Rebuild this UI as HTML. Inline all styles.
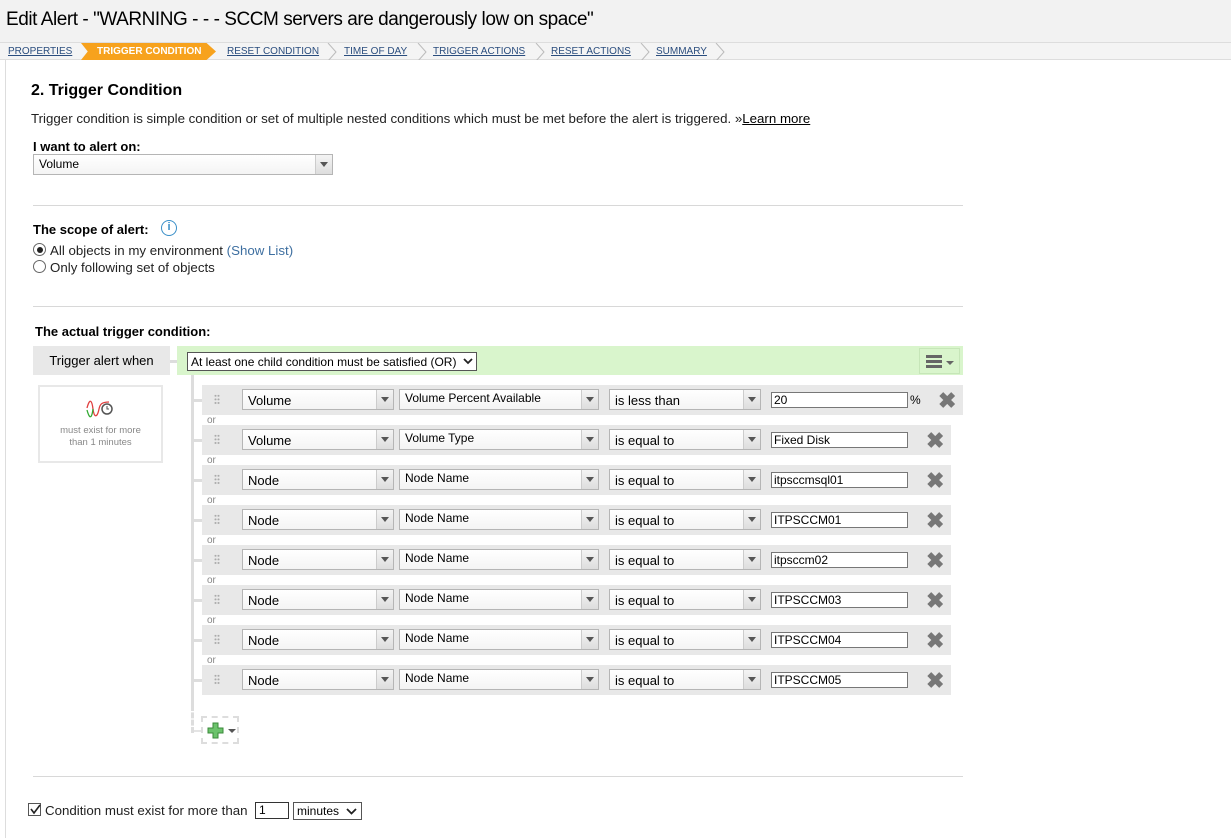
<!DOCTYPE html>
<html><head><meta charset="utf-8"><style>
*{margin:0;padding:0;box-sizing:border-box}
body{width:1231px;height:838px;background:#fff;font-family:"Liberation Sans",Arial,sans-serif;color:#000;position:relative;overflow:hidden;font-size:13px}
.a{position:absolute}
#top{left:0;top:0;width:1231px;height:42px;background:#f2f2f2}
#title{left:6px;top:9px;font-size:19px;white-space:nowrap;letter-spacing:-0.45px}
#tabs{left:0;top:42px;width:1231px;height:18px;background:#f4f4f4;border-top:1px solid #ddd;border-bottom:1px solid #ddd}
.tab{top:3px;font-size:10px;color:#2a4d7e;text-decoration:underline;white-space:nowrap}
#panel{left:5px;top:60px;width:1226px;height:778px;border-left:1px solid #ddd;background:#fff}
.hr{height:1px;background:#d8d8d8;left:33px;width:930px}
.sel{position:absolute;height:21px;border:1px solid #b5b5b5;background:linear-gradient(#fff,#f4f4f4);font-size:13px;padding:2px 0 0 5px;white-space:nowrap;overflow:hidden}
.sel:after{content:"";position:absolute;right:0;top:0;width:16px;height:19px;background:linear-gradient(#f4f4f4,#ddd);border-left:1px solid #ccc}
.sel b{position:absolute;right:4px;top:7px;width:0;height:0;border-left:4px solid transparent;border-right:4px solid transparent;border-top:5px solid #555;z-index:2}
.sel.s{font-size:12px;padding-top:1px}
.row{position:absolute;left:202px;height:30px;background:#e8e8e8}
.grip{position:absolute;left:12px;top:9px;width:6px;height:11px;background:radial-gradient(circle,#aaa 0.9px,transparent 1.1px) 0 0/3px 3.6px}
.inp{position:absolute;left:569px;top:7px;width:137px;height:16px;border:1px solid #777;background:#fff;font-size:12px;padding-left:2px;line-height:14px}
.x{position:absolute;top:3px;font-size:22px;color:#777;font-weight:bold}
.or{position:absolute;left:207px;font-size:10px;color:#888}
.conn{position:absolute;left:192px;width:10px;height:3px;background:#ddd}
</style></head><body>
<div id="top" class="a"></div>
<div id="title" class="a">Edit Alert - "WARNING - - - SCCM servers are dangerously low on space"</div>
<div id="tabs" class="a">
<span class="a tab" style="left:8px">PROPERTIES</span>
<div class="a" style="left:81px;top:0;width:135px;height:17px;background:#f7a21d;clip-path:polygon(0 0,93% 0,100% 50%,93% 100%,0 100%,5% 50%)"></div>
<span class="a tab" style="left:97px;color:#fff;text-decoration:none;font-weight:bold">TRIGGER CONDITION</span>
<span class="a tab" style="left:227px">RESET CONDITION</span>
<span class="a tab" style="left:344px">TIME OF DAY</span>
<span class="a tab" style="left:433px">TRIGGER ACTIONS</span>
<span class="a tab" style="left:551px">RESET ACTIONS</span>
<span class="a tab" style="left:656px">SUMMARY</span>
<svg class="a" style="left:0;top:0" width="740" height="18"><g fill="none" stroke="#bbb"><path d="M328 0l8 9-8 9M418 0l8 9-8 9M536 0l8 9-8 9M641 0l8 9-8 9M716 0l8 9-8 9"/></g></svg>
</div>
<div id="panel" class="a"></div>
<div class="a" style="left:31px;top:82px;font-size:16px;font-weight:bold">2. Trigger Condition</div>
<div class="a" style="left:31px;top:111px;font-size:13.3px;color:#222;white-space:nowrap">Trigger condition is simple condition or set of multiple nested conditions which must be met before the alert is triggered. »<u style="color:#000">Learn more</u></div>
<div class="a" style="left:33px;top:139px;font-weight:bold;font-size:13px">I want to alert on:</div>
<div class="sel" style="left:33px;top:154px;width:300px;font-size:12px;padding-top:2px">Volume<b></b></div>
<div class="a hr" style="top:205px"></div>
<div class="a" style="left:33px;top:222px;font-weight:bold">The scope of alert:</div>
<div class="a" style="left:161px;top:220px;width:16px;height:16px;border:1.5px solid #3a8fc8;border-radius:50%;color:#3a8fc8;font-size:11px;font-weight:bold;text-align:center;line-height:13px">i</div>
<div class="a" style="left:33px;top:243px;width:13px;height:13px;border:1px solid #666;border-radius:50%;background:#fff"><div style="margin:2.5px;width:6px;height:6px;border-radius:50%;background:#222"></div></div>
<div class="a" style="left:50px;top:243px;color:#222;font-size:13.3px">All objects in my environment <span style="color:#3e6fa0">(Show List)</span></div>
<div class="a" style="left:33px;top:260px;width:13px;height:13px;border:1px solid #666;border-radius:50%;background:#fff"></div>
<div class="a" style="left:50px;top:260px;color:#222;font-size:13.3px">Only following set of objects</div>
<div class="a hr" style="top:306px"></div>
<div class="a" style="left:35px;top:324px;font-weight:bold">The actual trigger condition:</div>
<div class="a" style="left:33px;top:346px;width:137px;height:29px;background:#e8e8e8;font-size:13px;text-align:center;line-height:29px">Trigger alert when</div>
<div class="a" style="left:170px;top:360px;width:8px;height:3px;background:#ddd"></div>
<div class="a" style="left:177px;top:346px;width:786px;height:29px;background:#d9f5cc"></div>
<div class="a" style="left:187px;top:352px;width:290px;height:19px;border:1px solid #555;background:#fff;font-size:12px;padding:2px 0 0 3px;white-space:nowrap;overflow:hidden">At least one child condition must be satisfied (OR)<svg style="position:absolute;right:3px;top:5px" width="10" height="7"><path d="M1 1l4 4 4-4" fill="none" stroke="#222" stroke-width="1.8"/></svg></div>
<div class="a" style="left:919px;top:348px;width:41px;height:26px;border:1px solid #c6e6b8"><div style="position:absolute;left:6px;top:6px;width:16px;height:3px;background:#666;box-shadow:0 5px #666,0 10px #666"></div><div style="position:absolute;left:26px;top:12px;border-left:4px solid transparent;border-right:4px solid transparent;border-top:4px solid #666"></div></div>
<div class="a" style="left:38px;top:385px;width:125px;height:78px;border:2px solid #e8e8e8;text-align:center;color:#888;font-size:9.5px;line-height:12px"><svg style="display:block;margin:12px auto 6px;position:relative;left:-2px" width="28" height="20"><path d="M2 9 C5 -2 7 2 8 10 C9 18 12 20 14 10 C15 5 17 3 24 3" fill="none" stroke="#e04040" stroke-width="1.3"/><path d="M2 11 C5 22 7 18 8 10" fill="none" stroke="#3a3" stroke-width="1.3"/><circle cx="22" cy="10" r="5" fill="#fff" stroke="#555" stroke-width="1.5"/><path d="M22 7v3h2" fill="none" stroke="#555"/></svg>must exist for more<br>than 1 minutes</div>
<div class="a" style="left:191px;top:375px;width:3px;height:330px;background:#ddd"></div>
<div class="a" style="left:191px;top:705px;width:3px;height:28px;border-left:3px dashed #ddd"></div>
<div class="a" style="left:194px;top:730px;width:8px;height:2px;background:#e4e4e4"></div>
<div class="a" style="left:201px;top:716px;width:38px;height:28px;border:2px dashed #ddd"><svg style="position:absolute;left:4px;top:4px" width="18" height="18"><path d="M6 1h5v5h5v5h-5v5H6v-5H1V6h5z" fill="#6cc36c" stroke="#3a8a3a"/></svg><div style="position:absolute;left:25px;top:11px;border-left:4px solid transparent;border-right:4px solid transparent;border-top:4px solid #555"></div></div>

<div class="conn" style="top:399px"></div>
<div class="row" style="top:385px;width:761px"><div class="grip"></div><div class="sel" style="left:40px;top:4px;width:152px;padding-top:3px">Volume<b></b></div><div class="sel s" style="left:197px;top:4px;width:200px">Volume Percent Available<b></b></div><div class="sel" style="left:407px;top:4px;width:152px;padding-top:3px">is less than<b></b></div><div class="inp">20</div><span class="a" style="left:708px;top:8px;font-size:12px">%</span><span class="x" style="left:736px">✖</span></div>
<div class="or" style="top:415px">or</div>
<div class="conn" style="top:439px"></div>
<div class="row" style="top:425px;width:749px"><div class="grip"></div><div class="sel" style="left:40px;top:4px;width:152px;padding-top:3px">Volume<b></b></div><div class="sel s" style="left:197px;top:4px;width:200px">Volume Type<b></b></div><div class="sel" style="left:407px;top:4px;width:152px;padding-top:3px">is equal to<b></b></div><div class="inp">Fixed Disk</div><span class="x" style="left:724px">✖</span></div>
<div class="or" style="top:455px">or</div>
<div class="conn" style="top:479px"></div>
<div class="row" style="top:465px;width:749px"><div class="grip"></div><div class="sel" style="left:40px;top:4px;width:152px;padding-top:3px">Node<b></b></div><div class="sel s" style="left:197px;top:4px;width:200px">Node Name<b></b></div><div class="sel" style="left:407px;top:4px;width:152px;padding-top:3px">is equal to<b></b></div><div class="inp">itpsccmsql01</div><span class="x" style="left:724px">✖</span></div>
<div class="or" style="top:495px">or</div>
<div class="conn" style="top:519px"></div>
<div class="row" style="top:505px;width:749px"><div class="grip"></div><div class="sel" style="left:40px;top:4px;width:152px;padding-top:3px">Node<b></b></div><div class="sel s" style="left:197px;top:4px;width:200px">Node Name<b></b></div><div class="sel" style="left:407px;top:4px;width:152px;padding-top:3px">is equal to<b></b></div><div class="inp">ITPSCCM01</div><span class="x" style="left:724px">✖</span></div>
<div class="or" style="top:535px">or</div>
<div class="conn" style="top:559px"></div>
<div class="row" style="top:545px;width:749px"><div class="grip"></div><div class="sel" style="left:40px;top:4px;width:152px;padding-top:3px">Node<b></b></div><div class="sel s" style="left:197px;top:4px;width:200px">Node Name<b></b></div><div class="sel" style="left:407px;top:4px;width:152px;padding-top:3px">is equal to<b></b></div><div class="inp">itpsccm02</div><span class="x" style="left:724px">✖</span></div>
<div class="or" style="top:575px">or</div>
<div class="conn" style="top:599px"></div>
<div class="row" style="top:585px;width:749px"><div class="grip"></div><div class="sel" style="left:40px;top:4px;width:152px;padding-top:3px">Node<b></b></div><div class="sel s" style="left:197px;top:4px;width:200px">Node Name<b></b></div><div class="sel" style="left:407px;top:4px;width:152px;padding-top:3px">is equal to<b></b></div><div class="inp">ITPSCCM03</div><span class="x" style="left:724px">✖</span></div>
<div class="or" style="top:615px">or</div>
<div class="conn" style="top:639px"></div>
<div class="row" style="top:625px;width:749px"><div class="grip"></div><div class="sel" style="left:40px;top:4px;width:152px;padding-top:3px">Node<b></b></div><div class="sel s" style="left:197px;top:4px;width:200px">Node Name<b></b></div><div class="sel" style="left:407px;top:4px;width:152px;padding-top:3px">is equal to<b></b></div><div class="inp">ITPSCCM04</div><span class="x" style="left:724px">✖</span></div>
<div class="or" style="top:655px">or</div>
<div class="conn" style="top:679px"></div>
<div class="row" style="top:665px;width:749px"><div class="grip"></div><div class="sel" style="left:40px;top:4px;width:152px;padding-top:3px">Node<b></b></div><div class="sel s" style="left:197px;top:4px;width:200px">Node Name<b></b></div><div class="sel" style="left:407px;top:4px;width:152px;padding-top:3px">is equal to<b></b></div><div class="inp">ITPSCCM05</div><span class="x" style="left:724px">✖</span></div>

<div class="a hr" style="top:776px"></div>
<div class="a" style="left:28px;top:803px;width:13px;height:13px;border:1px solid #555;background:#fff"><svg style="position:absolute;left:1px;top:0" width="11" height="11"><path d="M1 5l3 4 6-8" fill="none" stroke="#222" stroke-width="1.6"/></svg></div>
<div class="a" style="left:45px;top:803px;color:#222;font-size:13.3px">Condition must exist for more than</div>
<div class="a" style="left:255px;top:802px;width:34px;height:17px;border:1px solid #333;background:#fff;font-size:12px;padding-left:3px;line-height:15px">1</div>
<div class="a" style="left:293px;top:802px;width:69px;height:18px;border:1px solid #555;background:#fff;font-size:12px;padding:1px 0 0 3px">minutes<svg style="position:absolute;right:4px;top:5px" width="11" height="7"><path d="M1 1l4.5 4.5L10 1" fill="none" stroke="#222" stroke-width="1.8"/></svg></div>
</body></html>
